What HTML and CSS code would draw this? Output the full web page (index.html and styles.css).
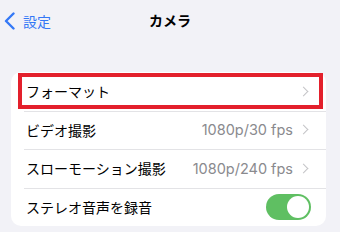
FILE: index.html
```html
<!DOCTYPE html>
<html lang="ja">
<head>
  <meta charset="UTF-8">
  <meta name="viewport" content="width=device-width, initial-scale=1.0">
  <title>カメラ</title>
  <link rel="stylesheet" href="styles.css">
</head>
<body>

  <!-- Navigation bar -->
  <div class="nav">
    <a class="back" href="#">
      <svg width="12" height="18" viewBox="0 0 12 18">
        <polyline points="9.5,1.5 2,9 9.5,16.5" fill="none" stroke="#3478f6" stroke-width="2.4" stroke-linecap="round" stroke-linejoin="round"/>
      </svg>
      <span>設定</span>
    </a>
    <h1>カメラ</h1>
  </div>

  <!-- Settings list -->
  <div class="card">
    <div class="row highlighted">
      <span class="label">フォーマット</span>
      <span class="chevron"></span>
      <div class="mark"></div>
    </div>
    <div class="row">
      <span class="label">ビデオ撮影</span>
      <span class="value">1080p/30 fps</span>
      <span class="chevron"></span>
    </div>
    <div class="row">
      <span class="label">スローモーション撮影</span>
      <span class="value">1080p/240 fps</span>
      <span class="chevron"></span>
    </div>
    <div class="row">
      <span class="label">ステレオ音声を録音</span>
      <span class="toggle on"><span class="knob"></span></span>
    </div>
  </div>

</body>
</html>
```

FILE: styles.css
```css
body {
  font-family: 'Inter', 'Noto Sans CJK JP', sans-serif;
  background-color: #f2f2f7;
  margin: 0;
  padding: 0;
  color: #000;
}

.nav {
  position: relative;
  height: 40px;
  display: flex;
  align-items: center;
  justify-content: center;
}

.nav h1 {
  margin: 0;
  font-size: 14px;
  font-weight: 700;
}

.back {
  position: absolute;
  left: 4px;
  top: 11px;
  display: flex;
  align-items: center;
  gap: 7px;
  color: #3478f6;
  text-decoration: none;
  font-size: 14px;
}

.card {
  background-color: #fff;
  border-radius: 10px;
  margin: 32px 14px 0 11px;
}

.row {
  position: relative;
  height: 38.5px;
  display: flex;
  align-items: center;
  padding: 0 18px 0 15px;
  font-size: 14px;
}

.row + .row::before {
  content: '';
  position: absolute;
  top: 0;
  left: 13px;
  right: 0;
  border-top: 1px solid #e3e3e6;
}

.label {
  flex: 1;
  font-family: 'Noto Sans CJK JP', sans-serif;
}

.value {
  color: #8a8a8e;
  font-size: 14.5px;
  margin-right: 7px;
}

.chevron {
  width: 6px;
  height: 6px;
  border-top: 1.5px solid #c4c4c7;
  border-right: 1.5px solid #c4c4c7;
  transform: rotate(45deg);
  margin-right: 1px;
}

.mark {
  position: absolute;
  left: 7px;
  right: 3px;
  top: 1px;
  bottom: 2px;
  border: 4.5px solid #e3202c;
}

.toggle {
  width: 45px;
  height: 26px;
  border-radius: 13px;
  background-color: #5fbf62;
  position: relative;
  margin-right: -3px;
}

.toggle .knob {
  position: absolute;
  right: 2px;
  top: 2px;
  width: 22px;
  height: 22px;
  border-radius: 50%;
  background-color: #fff;
}
```
